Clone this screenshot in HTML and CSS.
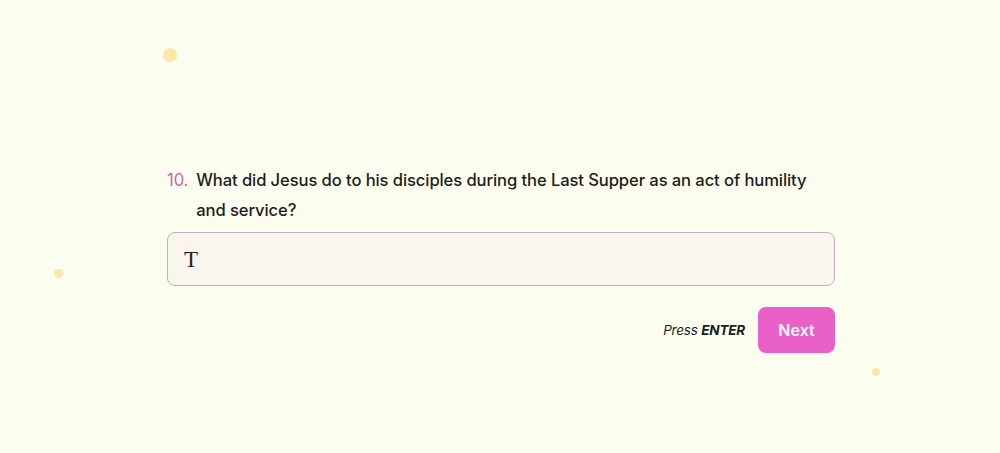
FILE: index.html
```html
<!DOCTYPE html>
<html>
<head>
<meta charset="utf-8">
<link rel="stylesheet" href="styles.css">
</head>
<body>
<div class="page">
  <span class="dot dot-a"></span>
  <span class="dot dot-b"></span>
  <span class="dot dot-c"></span>
  <main class="form">
    <div class="question">
      <span class="num">10.</span>
      <span class="text">What did Jesus do to his disciples during the Last Supper as an act of humility and service?</span>
    </div>
    <div class="field"><span class="typed">T</span></div>
    <div class="actions">
      <span class="hint">Press <b>ENTER</b></span>
      <button class="next">Next</button>
    </div>
  </main>
</div>
</body>
</html>
```
FILE: styles.css
```css
html, body {
  margin: 0;
  padding: 0;
  background: #fbfdef;
}
.page {
  position: relative;
  width: 1000px;
  height: 453px;
  overflow: hidden;
  font-family: "Inter", "Noto Sans", sans-serif;
  color: #1c1c1c;
}
.dot {
  position: absolute;
  border-radius: 50%;
  background: #fde7a6;
  filter: blur(0.6px);
}
.dot-a { left: 163px; top: 48px; width: 14px; height: 14px; }
.dot-b { left: 54px; top: 269px; width: 9px; height: 9px; }
.dot-c { left: 872px; top: 368px; width: 8px; height: 8px; }
.form {
  width: 668px;
  margin-left: 167px;
  padding-top: 165px;
}
.question {
  display: flex;
  gap: 8px;
  font-size: 16.6px;
  line-height: 30px;
  letter-spacing: -0.1px;
}
.num {
  color: #d65db3;
}
.text {
  color: #1d1d1d;
  font-weight: 500;
  flex: 1;
}
.field {
  margin-top: 7px;
  height: 52px;
  border: 1px solid #c7acc6;
  border-radius: 8px;
  background: #f9f6ee;
  display: flex;
  align-items: center;
  padding-left: 16px;
}
.typed {
  font-family: "Liberation Serif", serif;
  font-size: 23px;
  color: #222;
  margin-top: 1px;
}
.actions {
  margin-top: 21px;
  display: flex;
  justify-content: flex-end;
  align-items: center;
  gap: 13px;
}
.hint {
  font-style: italic;
  font-size: 13.5px;
  letter-spacing: -0.2px;
  color: #1d1d1d;
}
.hint b { font-weight: 700; }
.next {
  width: 77px;
  height: 46px;
  border: 0;
  border-radius: 8px;
  background: #e860c8;
  color: #fff;
  font-family: "Inter", "Noto Sans", sans-serif;
  font-size: 16px;
  font-weight: 600;
  padding: 0;
}
```
